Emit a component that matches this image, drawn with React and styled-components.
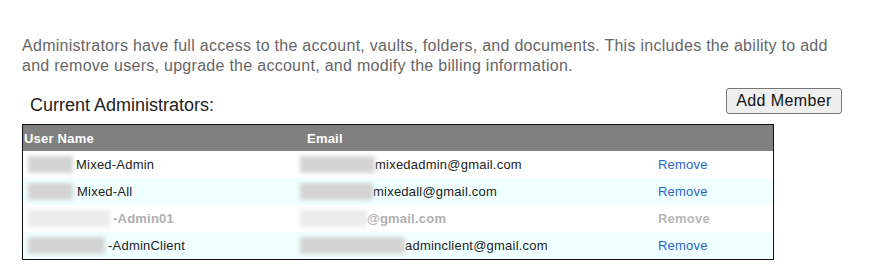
import React from 'react';
import styled, { createGlobalStyle } from 'styled-components';

const GlobalStyle = createGlobalStyle`
    body {
        margin: 0;
        background: #ffffff;
        font-family: "Liberation Sans", Arial, sans-serif;
    }
`;

const Page = styled.div`
    width: 878px;
    height: 277px;
    padding: 36px 0 0 22px;
    box-sizing: border-box;
`;

const Intro = styled.p`
    margin: 0;
    width: 830px;
    font-size: 16px;
    line-height: 20px;
    letter-spacing: 0.28px;
    color: #666666;
`;

const TitleRow = styled.div`
    display: flex;
    justify-content: space-between;
    align-items: flex-end;
    width: 820px;
    margin-top: 12px;
`;

const Title = styled.h3`
    margin: 0 0 8px 8px;
    font-size: 18px;
    font-weight: normal;
    color: #222222;
`;

const AddButton = styled.button`
    width: 116px;
    height: 26px;
    margin-bottom: 10px;
    font-family: "Liberation Sans", Arial, sans-serif;
    font-size: 16px;
    letter-spacing: 0.4px;
    color: #111111;
    background: #efefef;
    border: 1px solid #767676;
    border-radius: 3px;
    padding: 0;
`;

const Table = styled.div`
    width: 750px;
    border: 1px solid #111111;
`;

const Row = styled.div`
    display: grid;
    grid-template-columns: 282px 352px 1fr;
    height: ${(p) => (p.$head ? '26px' : '27px')};
    align-items: center;
    font-size: 13px;
    letter-spacing: 0.22px;
    background: ${(p) => (p.$head ? '#808080' : p.$alt ? '#f0ffff' : '#ffffff')};
    color: ${(p) => (p.$head ? '#ffffff' : p.$muted ? '#b0b0b0' : '#222222')};
    font-weight: ${(p) => (p.$head || p.$muted ? 'bold' : 'normal')};
`;

const Cell = styled.div`
    display: flex;
    align-items: center;
    padding-left: ${(p) => p.$pad || '1px'};
    white-space: nowrap;
`;

const Blur = styled.span`
    display: inline-block;
    width: ${(p) => p.$w}px;
    height: 17px;
    margin-left: ${(p) => p.$shift || 0}px;
    margin-right: ${(p) => p.$gap || 0}px;
    background: ${(p) => (p.$muted ? '#ececec' : '#d4d4d4')};
    filter: blur(2px);
`;

const RemoveLink = styled.a`
    color: ${(p) => (p.$muted ? '#b8b8b8' : '#2a64c8')};
    text-decoration: none;
    cursor: pointer;
`;

const admins = [
    { blur: 45, name: 'Mixed-Admin', mailBlur: 75, mail: 'mixedadmin@gmail.com' },
    { blur: 45, name: 'Mixed-All', mailBlur: 73, mail: 'mixedall@gmail.com', gap: 4 },
    { blur: 82, name: '-Admin01', mailBlur: 67, mail: '@gmail.com', muted: true },
    { blur: 77, name: '-AdminClient', mailBlur: 105, mail: 'adminclient@gmail.com' },
];

const App = () => (
    <Page>
        <GlobalStyle />
        <Intro>
            Administrators have full access to the account, vaults, folders, and documents. This includes the ability to add
            and remove users, upgrade the account, and modify the billing information.
        </Intro>
        <TitleRow>
            <Title>Current Administrators:</Title>
            <AddButton>Add Member</AddButton>
        </TitleRow>
        <Table>
            <Row $head>
                <Cell>User Name</Cell>
                <Cell $pad="2px">Email</Cell>
                <Cell />
            </Row>
            {admins.map((a, i) => (
                <Row key={a.name} $alt={i % 2 === 1} $muted={a.muted}>
                    <Cell $pad="5px">
                        <Blur $w={a.blur} $gap={a.gap || 3} $muted={a.muted} />
                        {a.name}
                    </Cell>
                    <Cell>
                        <Blur $w={a.mailBlur} $shift={-6} $muted={a.muted} />
                        {a.mail}
                    </Cell>
                    <Cell>
                        <RemoveLink $muted={a.muted}>Remove</RemoveLink>
                    </Cell>
                </Row>
            ))}
        </Table>
    </Page>
);

export default App;
